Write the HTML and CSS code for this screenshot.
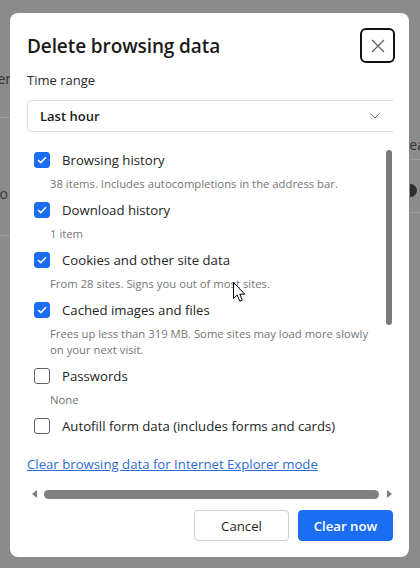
FILE: index.html
```html
<!DOCTYPE html>
<html>
<head>
<meta charset="utf-8">
<link rel="stylesheet" href="styles.css">
</head>
<body>
<div class="backdrop">
  <div class="bg-left">
    <div class="bg-txt bg-t1">Header</div>
    <div class="bg-line bg-l1"></div>
    <div class="bg-txt bg-t2">Info</div>
    <div class="bg-line bg-l2"></div>
  </div>
  <div class="bg-right">
    <div class="bg-txt bg-r1">Clear</div>
    <div class="bg-line bg-r2"></div>
    <div class="bg-knob"></div>
    <div class="bg-line bg-r3"></div>
  </div>
</div>

<div class="dialog">
  <div class="dlg-head">
    <h1 class="dlg-title">Delete browsing data</h1>
    <button class="close-btn" aria-label="Close">
      <svg width="14" height="14" viewBox="0 0 14 14"><path d="M1 1 L13 13 M13 1 L1 13" stroke="#5a5a5a" stroke-width="1.1" fill="none"/></svg>
    </button>
  </div>

  <div class="hscroll">
    <div class="field-label">Time range</div>
    <div class="select">
      <span class="select-value">Last hour</span>
      <svg class="chev" width="10" height="6" viewBox="0 0 10 6"><path d="M0.5 0.5 L5 5 L9.5 0.5" stroke="#777" stroke-width="1" fill="none"/></svg>
    </div>

    <div class="list">
      <div class="items">
        <div class="item">
          <label class="row"><span class="cb on"><svg width="10" height="8" viewBox="0 0 10 8"><path d="M1 4 L3.8 6.6 L9 1.2" stroke="#fff" stroke-width="1.5" fill="none"/></svg></span><span class="lbl">Browsing history</span></label>
          <div class="sub">38 items. Includes autocompletions in the address bar.</div>
        </div>
        <div class="item">
          <label class="row"><span class="cb on"><svg width="10" height="8" viewBox="0 0 10 8"><path d="M1 4 L3.8 6.6 L9 1.2" stroke="#fff" stroke-width="1.5" fill="none"/></svg></span><span class="lbl">Download history</span></label>
          <div class="sub">1 item</div>
        </div>
        <div class="item">
          <label class="row"><span class="cb on"><svg width="10" height="8" viewBox="0 0 10 8"><path d="M1 4 L3.8 6.6 L9 1.2" stroke="#fff" stroke-width="1.5" fill="none"/></svg></span><span class="lbl">Cookies and other site data</span></label>
          <div class="sub">From 28 sites. Signs you out of most sites.</div>
        </div>
        <div class="item">
          <label class="row"><span class="cb on"><svg width="10" height="8" viewBox="0 0 10 8"><path d="M1 4 L3.8 6.6 L9 1.2" stroke="#fff" stroke-width="1.5" fill="none"/></svg></span><span class="lbl">Cached images and files</span></label>
          <div class="sub">Frees up less than 319 MB. Some sites may load more slowly<br>on your next visit.</div>
        </div>
        <div class="item">
          <label class="row"><span class="cb"></span><span class="lbl">Passwords</span></label>
          <div class="sub">None</div>
        </div>
        <div class="item">
          <label class="row"><span class="cb"></span><span class="lbl">Autofill form data (includes forms and cards)</span></label>
        </div>
      </div>
      <div class="vtrack"><div class="vthumb"></div></div>
    </div>

    <a class="ie-link" href="#">Clear browsing data for Internet Explorer mode</a>
  </div>

  <div class="hbar">
    <span class="arrow-l"></span>
    <div class="hthumb"></div>
    <span class="arrow-r"></span>
  </div>

  <div class="actions">
    <button class="btn">Cancel</button>
    <button class="btn primary">Clear now</button>
  </div>
</div>

<svg class="cursor" width="14" height="21" viewBox="0 0 14 21">
  <path d="M0.5 0.5 L0.5 16.5 L4.2 13 L6.8 19.2 L9.3 18.2 L6.8 12.2 L11.8 12.2 Z" fill="#fff" stroke="#000" stroke-width="1" stroke-linejoin="round"/>
</svg>
</body>
</html>
```

FILE: styles.css
```css
* { box-sizing: border-box; }
html, body {
  margin: 0;
  padding: 0;
  width: 420px;
  height: 568px;
  overflow: hidden;
}
body {
  background: #8b8b8b;
  font-family: "Open Sans", "Noto Sans", sans-serif;
  color: #1f1f1f;
  position: relative;
}

/* page behind the overlay */
.backdrop {
  display: flex;
  justify-content: space-between;
  height: 568px;
}
.bg-left, .bg-right {
  width: 10px;
  overflow: hidden;
}
.bg-txt {
  font-size: 14px;
  line-height: 16px;
  color: #333;
  white-space: nowrap;
}
.bg-left .bg-txt { direction: rtl; text-align: right; }
.bg-t1 { margin-top: 71px; margin-right: -1px; }
.bg-line { height: 1px; background: #9c9c9c; }
.bg-l1 { margin-top: 30px; }
.bg-t2 { margin-top: 68px; padding-right: 2px; }
.bg-l2 { margin-top: 33px; }
.bg-r1 { margin-top: 137px; text-indent: -13px; }
.bg-r2 { margin-top: 6px; }
.bg-knob {
  margin-top: 24px;
  width: 13px;
  height: 13px;
  border-radius: 50%;
  background: #2e2e2e;
  margin-left: -6px;
}
.bg-r3 { margin-top: 15px; }

/* dialog */
.dialog {
  position: absolute;
  left: 10px;
  top: 13px;
  width: 399px;
  height: 544px;
  background: #fff;
  border-radius: 8px;
  padding: 15px 16px 16px 17px;
  display: flex;
  flex-direction: column;
}
.dlg-head {
  display: flex;
  align-items: center;
  justify-content: space-between;
  height: 35px;
  margin-right: -2px;
}
.dlg-title {
  margin: 0;
  font-size: 19px;
  font-weight: 600;
  color: #1b1b1b;
  letter-spacing: -0.1px;
}
.close-btn {
  width: 35px;
  height: 35px;
  border: 2px solid #111;
  border-radius: 6px;
  background: #fff;
  display: flex;
  align-items: center;
  justify-content: center;
  padding: 0;
}

.hscroll {
  width: 366px;
  overflow: hidden;
  display: flex;
  flex-direction: column;
}
.field-label {
  margin-top: 7px;
  font-size: 13px;
  line-height: 20px;
  color: #2b2b2b;
}
.select {
  margin-top: 10px;
  width: 380px;
  flex: none;
  height: 32px;
  border: 1px solid #dcdcdc;
  border-radius: 5px;
  display: flex;
  align-items: center;
  padding-left: 12px;
}
.select-value {
  font-size: 13px;
  font-weight: 600;
  color: #1b1b1b;
  flex: 1;
}
.chev { margin-right: 26px; }

.list {
  margin-top: 9px;
  height: 300px;
  display: flex;
  overflow: hidden;
}
.items {
  flex: 1;
  padding: 7px 0 0 7px;
}
.item { margin-bottom: 6px; }
.row {
  display: flex;
  align-items: center;
  height: 24px;
  gap: 12px;
}
.cb {
  width: 16px;
  height: 16px;
  border: 1px solid #5f5f5f;
  border-radius: 3px;
  display: flex;
  align-items: center;
  justify-content: center;
  flex: none;
}
.cb.on {
  background: #1b6ef2;
  border-color: #1b6ef2;
}
.lbl {
  font-size: 13.2px;
  color: #242424;
  white-space: nowrap;
}
.sub {
  margin-top: 4px;
  padding-left: 16px;
  font-size: 11.3px;
  line-height: 16px;
  color: #767676;
  white-space: nowrap;
}
.vtrack {
  width: 6px;
  margin-right: 1px;
  padding-top: 9px;
}
.vthumb {
  height: 175px;
  border-radius: 3px;
  background: #7b7b7b;
}

.ie-link {
  margin-top: 13px;
  font-size: 13.2px;
  line-height: 20px;
  color: #2f6bd4;
  text-decoration: underline;
  white-space: nowrap;
}

.hbar {
  margin-top: 12px;
  height: 16px;
  display: flex;
  align-items: center;
  padding: 0 5px 0 5px;
  width: 370px;
}
.arrow-l {
  width: 0; height: 0;
  border-top: 4px solid transparent;
  border-bottom: 4px solid transparent;
  border-right: 5px solid #7d7d7d;
}
.arrow-r {
  width: 0; height: 0;
  border-top: 4px solid transparent;
  border-bottom: 4px solid transparent;
  border-left: 5px solid #7d7d7d;
}
.hthumb {
  flex: 1;
  height: 9px;
  border-radius: 5px;
  background: #808080;
  margin: 0 8px 0 7px;
}

.actions {
  margin-top: 8px;
  display: flex;
  justify-content: flex-end;
  gap: 9px;
}
.btn {
  width: 95px;
  height: 31px;
  border: 1px solid #d1d1d1;
  border-radius: 4px;
  background: #fff;
  font-family: inherit;
  font-size: 13.2px;
  color: #1f1f1f;
  padding: 0;
}
.btn.primary {
  background: #1b6ef2;
  border-color: #1b6ef2;
  color: #fff;
  font-weight: 600;
}

.cursor {
  position: absolute;
  left: 233px;
  top: 282px;
}
```
